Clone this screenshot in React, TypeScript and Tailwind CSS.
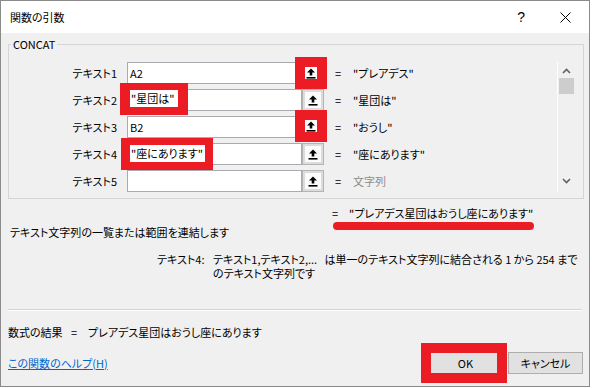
import React from "react";

type Row = {
    label: string;
    value: string;
    result: string;
    muted?: boolean;
    mark?: "button" | "text";
};

const rows: Row[] = [
    { label: "テキスト1", value: "A2", result: "\"プレアデス\"", mark: "button" },
    { label: "テキスト2", value: "\"星団は\"", result: "\"星団は\"", mark: "text" },
    { label: "テキスト3", value: "B2", result: "\"おうし\"", mark: "button" },
    { label: "テキスト4", value: "\"座にあります\"", result: "\"座にあります\"", mark: "text" },
    { label: "テキスト5", value: "", result: "文字列", muted: true },
];

function RefIcon() {
    return (
        <svg width="10" height="11" viewBox="0 0 10 11">
            <path d="M5 0.5 L9 4.5 H6.3 V7.6 H3.7 V4.5 H1 Z" fill="#000" />
            <rect x="0.5" y="9" width="9" height="1.6" fill="#000" />
        </svg>
    );
}

function Chevron({ up }: { up?: boolean }) {
    return (
        <svg width="9" height="6" viewBox="0 0 9 6">
            <polyline
                points={up ? "1,5 4.5,1.5 8,5" : "1,1 4.5,4.5 8,1"}
                fill="none"
                stroke="#606060"
                strokeWidth="1.6"
            />
        </svg>
    );
}

function ArgRow({ row, idx }: { row: Row; idx: number }) {
    // red marks are annotations drawn over the dialog
    const redTop = idx === 0 || idx === 3 ? "-top-[5px]" : "-top-[6px]";
    return (
        <div className="relative flex items-center h-[22px] mb-[5px]">
            <div className="w-[108px] text-right whitespace-nowrap">{row.label}</div>
            <div className="ml-[10px] w-[175px] h-[22px] border border-[#a9abb0] bg-white pl-[2px] flex items-center whitespace-nowrap">
                {row.value}
            </div>
            <div className="w-[22px] h-[22px] border border-[#b4b4b4] bg-[#dcdcdc] p-[2px] flex">
                <div className="flex-1 bg-[#fbfbfb] flex items-center justify-center">
                    <RefIcon />
                </div>
            </div>
            <div className="ml-[10px] w-[8px] text-center">=</div>
            <div className={`ml-[11px] whitespace-nowrap ${row.muted ? "text-[#8d8d8d]" : ""}`}>
                {row.result}
            </div>

            {row.mark === "button" && (
                <div className={`absolute left-[286px] ${redTop} w-[32px] h-[32px] bg-[#ec1c24] flex items-center justify-center`}>
                    <div className="w-[12px] h-[12px] bg-white flex items-center justify-center">
                        <RefIcon />
                    </div>
                </div>
            )}
            {row.mark === "text" && idx === 1 && (
                <div className="absolute left-[111px] -top-[6px] w-[68px] h-[32px] bg-[#ec1c24] pl-[10px] pt-[7px]">
                    <div className="w-[48px] h-[17px] bg-white pl-[1px] leading-[17px] whitespace-nowrap">
                        {row.value}
                    </div>
                </div>
            )}
            {row.mark === "text" && idx === 3 && (
                <div className="absolute left-[112px] -top-[5px] w-[92px] h-[32px] bg-[#ec1c24] pl-[9px] pt-[7px]">
                    <div className="w-[75px] h-[17px] bg-white pl-[1px] leading-[17px] whitespace-nowrap">
                        {row.value}
                    </div>
                </div>
            )}
        </div>
    );
}

export default function App() {
    return (
        <div className="w-[592px] h-[388px] bg-white overflow-hidden font-['Noto_Sans_CJK_JP',sans-serif] [font-feature-settings:'palt'] text-[11px] text-black leading-[16px]">
            <div className="w-[590px] h-[387px] border border-[#8a8a8a] flex flex-col bg-[#f0f0f0]">
                {/* Title bar */}
                <div className="h-[32px] bg-white flex items-center pl-[9px] shrink-0">
                    <span>関数の引数</span>
                    <span className="ml-auto text-[14px] font-['Liberation_Sans',sans-serif]">?</span>
                    <svg className="ml-[35px] mr-[18px]" width="11" height="11" viewBox="0 0 11 11">
                        <path d="M0.5 0.5 L10.5 10.5 M10.5 0.5 L0.5 10.5" stroke="#000" strokeWidth="1" />
                    </svg>
                </div>

                <div className="relative flex-1 flex flex-col">
                    {/* Group box */}
                    <div className="relative mt-[11px] ml-[7px] w-[576px] h-[155px] border border-[#d5d5d5] flex pt-[17px] pr-[8px]">
                        <span className="absolute left-[2px] -top-[9px] px-[2px] bg-[#f0f0f0]">CONCAT</span>
                        <div className="flex-1">
                            {rows.map((r, i) => (
                                <ArgRow key={r.label} row={r} idx={i} />
                            ))}
                        </div>
                        <div className="w-[18px] h-[130px] border-l border-white flex flex-col items-center">
                            <div className="h-[16px] flex items-center justify-center pt-[2px]">
                                <Chevron up />
                            </div>
                            <div className="w-[15px] h-[16px] bg-[#cdcdcd]" />
                            <div className="flex-1" />
                            <div className="h-[18px] flex items-center justify-center pb-[4px]">
                                <Chevron />
                            </div>
                        </div>
                    </div>

                    {/* Result */}
                    <div className="relative mt-[6px] pl-[331px] h-[16px] flex whitespace-nowrap">
                        <span>=</span>
                        <span className="ml-[11px]">"プレアデス星団はおうし座にあります"</span>
                        <div className="absolute left-[332px] top-[17px] w-[201px] h-[8px] rounded-full bg-[#ec1c24]" />
                    </div>
                    <div className="mt-[3px] pl-[9px] h-[16px] whitespace-nowrap">
                        テキスト文字列の一覧または範囲を連結します
                    </div>

                    <div className="mt-[12px] flex leading-[14px] whitespace-nowrap">
                        <span className="ml-[156px] w-[56px]">テキスト4:</span>
                        <div>
                            <div>テキスト1,テキスト2,...&nbsp;&nbsp;&nbsp;は単一のテキスト文字列に結合される 1 から 254 まで</div>
                            <div>のテキスト文字列です</div>
                        </div>
                    </div>

                    <div className="mt-[29px] mx-[7px] h-[2px] border-t border-[#d5d5d5] border-b border-b-white" />

                    <div className="mt-[13px] pl-[7px] h-[16px] flex whitespace-nowrap">
                        <span className="w-[62px]">数式の結果</span>
                        <span className="w-[8px] text-center">=</span>
                        <span className="ml-[10px]">プレアデス星団はおうし座にあります</span>
                    </div>

                    <div className="mt-[12px] flex items-center pl-[7px] pr-[6px] h-[22px]">
                        <span className="text-[#0066cc] underline">この関数のヘルプ(H)</span>
                        <div className="ml-auto relative flex gap-[5px]">
                            <button className="w-[75px] h-[22px] border border-[#adadad] bg-[#e1e1e1]">OK</button>
                            <button className="w-[75px] h-[22px] border border-[#adadad] bg-[#e1e1e1]">キャンセル</button>
                            <div className="absolute -left-[7px] -top-[9px] w-[86px] h-[40px] border-[10px] border-[#ec1c24]" />
                        </div>
                    </div>
                </div>
            </div>
        </div>
    );
}
